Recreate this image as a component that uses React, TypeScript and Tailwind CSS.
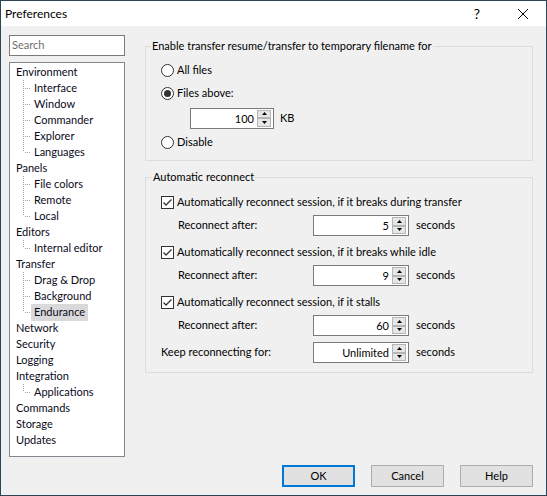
import React from 'react';

const tree: { label: string; children?: string[] }[] = [
  { label: 'Environment', children: ['Interface', 'Window', 'Commander', 'Explorer', 'Languages'] },
  { label: 'Panels', children: ['File colors', 'Remote', 'Local'] },
  { label: 'Editors', children: ['Internal editor'] },
  { label: 'Transfer', children: ['Drag & Drop', 'Background', 'Endurance'] },
  { label: 'Network' },
  { label: 'Security' },
  { label: 'Logging' },
  { label: 'Integration', children: ['Applications'] },
  { label: 'Commands' },
  { label: 'Storage' },
  { label: 'Updates' },
];

const Connector = ({ last }: { last: boolean }) => (
  <svg width="8" height="16" className="shrink-0" shapeRendering="crispEdges">
    <line x1="0.5" y1="0" x2="0.5" y2={last ? 8 : 16} stroke="#a0a0a0" strokeDasharray="1 1" />
    <line x1="2" y1="8.5" x2="8" y2="8.5" stroke="#a0a0a0" strokeDasharray="1 1" />
  </svg>
);

const Radio = ({ checked }: { checked?: boolean }) => (
  <span className="w-[13px] h-[13px] rounded-full border border-[#333333] bg-white flex items-center justify-center shrink-0">
    {checked && <span className="w-[7px] h-[7px] rounded-full bg-[#333333]" />}
  </span>
);

const Check = () => (
  <span className="w-[13px] h-[13px] border border-[#333333] bg-white flex items-center justify-center shrink-0">
    <svg width="11" height="11" viewBox="0 0 11 11">
      <polyline points="1.5,5.5 4,8 9.5,2.5" fill="none" stroke="#333333" strokeWidth="1.3" />
    </svg>
  </span>
);

const Arrow = ({ up }: { up?: boolean }) => (
  <span className="flex-1 bg-[#e6e6e6] border border-[#b5b5b5] flex items-center justify-center">
    <svg width="5" height="3" viewBox="0 0 5 3">
      <polygon points={up ? '2.5,0 5,3 0,3' : '0,0 5,0 2.5,3'} fill="#000" />
    </svg>
  </span>
);

const Spin = ({ value, w }: { value: string; w: string }) => (
  <div className={`${w} h-[21px] border border-[#7a7a7a] bg-white flex items-center shrink-0`}>
    <span className="flex-1 text-right pr-[3px] leading-none">{value}</span>
    <span className="w-[14px] h-[17px] mr-[2px] flex flex-col">
      <Arrow up />
      <Arrow />
    </span>
  </div>
);

const Btn = ({ label, primary }: { label: string; primary?: boolean }) => (
  <button
    className={`w-[73px] h-[22px] bg-[#e1e1e1] ${
      primary ? 'border-2 border-[#0078d7]' : 'border border-[#adadad]'
    } flex items-center justify-center`}
  >
    {label}
  </button>
);

export default function App() {
  return (
    <div className="w-[547px] h-[496px] border border-[#2d4456] bg-[#f0f0f0] flex flex-col text-[11px] text-black font-['Lato',sans-serif] overflow-hidden">
      {/* title bar */}
      <div className="h-[25px] bg-white flex items-center shrink-0 text-[12px]">
        <span className="pl-[4px] flex-1">Preferences</span>
        <span className="w-[46px] text-center text-[14px] leading-none">?</span>
        <span className="w-[46px] flex justify-center">
          <svg width="10" height="10" viewBox="0 0 10 10">
            <path d="M0 0L10 10M10 0L0 10" stroke="#000" strokeWidth="1" />
          </svg>
        </span>
      </div>

      <div className="flex-1 flex flex-col px-[8px] pt-[9px] pb-[8px]">
        <div className="flex items-start gap-[20px]">
          {/* left */}
          <div className="w-[116px] flex flex-col gap-[6px]">
            <div className="h-[21px] border border-[#7a7a7a] bg-white flex items-center pl-[2px] text-[#6d6d6d]">
              Search
            </div>
            <div className="h-[395px] border border-[#828790] bg-white pt-[1px]">
              {tree.map((n) => (
                <React.Fragment key={n.label}>
                  <div className="h-[16px] flex items-center pl-[6px] text-[#0a0a1a]">{n.label}</div>
                  {n.children?.map((c, i) => (
                    <div key={c} className="h-[16px] flex items-center pl-[13px] text-[#0a0a1a]">
                      <Connector last={i === n.children!.length - 1} />
                      <span className={`px-[3px] h-[17px] flex items-center ${c === 'Endurance' ? 'bg-[#d9d9d9]' : ''}`}>
                        {c}
                      </span>
                    </div>
                  ))}
                </React.Fragment>
              ))}
            </div>
          </div>

          {/* right */}
          <div className="w-[388px] pt-[3px] flex flex-col gap-[8px]">
            <fieldset className="border border-[#dcdcdc] px-[15px] pb-[10px]">
              <legend className="-ml-[10px] px-[1px] leading-[16px]">
                Enable transfer resume/transfer to temporary filename for
              </legend>
              <div className="mt-[8px] h-[16px] flex items-center gap-[3px]">
                <Radio />
                <span>All files</span>
              </div>
              <div className="mt-[7px] h-[16px] flex items-center gap-[3px]">
                <Radio checked />
                <span>Files above:</span>
              </div>
              <div className="mt-[7px] h-[20px] flex items-center pl-[29px] gap-[6px]">
                <Spin value="100" w="w-[84px]" />
                <span>KB</span>
              </div>
              <div className="mt-[6px] h-[16px] flex items-center gap-[3px]">
                <Radio />
                <span>Disable</span>
              </div>
            </fieldset>

            <fieldset className="border border-[#dcdcdc] px-[15px] pb-[9px]">
              <legend className="-ml-[9px] px-[1px] leading-[16px]">Automatic reconnect</legend>
              {[
                ['Automatically reconnect session, if it breaks during transfer', '5'],
                ['Automatically reconnect session, if it breaks while idle', '9'],
                ['Automatically reconnect session, if it stalls', '60'],
              ].map(([label, v], i) => (
                <React.Fragment key={label}>
                  <div className={`${i === 0 ? 'mt-[9px]' : 'mt-[8px]'} h-[16px] flex items-center gap-[3px]`}>
                    <Check />
                    <span>{label}</span>
                  </div>
                  <div className="mt-[5px] h-[21px] flex items-center">
                    <span className="w-[152px] pl-[17px]">Reconnect after:</span>
                    <Spin value={v} w="w-[96px]" />
                    <span className="ml-[7px]">seconds</span>
                  </div>
                </React.Fragment>
              ))}
              <div className="mt-[6px] h-[21px] flex items-center">
                <span className="w-[152px]">Keep reconnecting for:</span>
                <Spin value="Unlimited" w="w-[96px]" />
                <span className="ml-[7px]">seconds</span>
              </div>
            </fieldset>
          </div>
        </div>

        <div className="mt-auto flex justify-end gap-[16px] pr-[5px]">
          <Btn label="OK" primary />
          <Btn label="Cancel" />
          <Btn label="Help" />
        </div>
      </div>
    </div>
  );
}
